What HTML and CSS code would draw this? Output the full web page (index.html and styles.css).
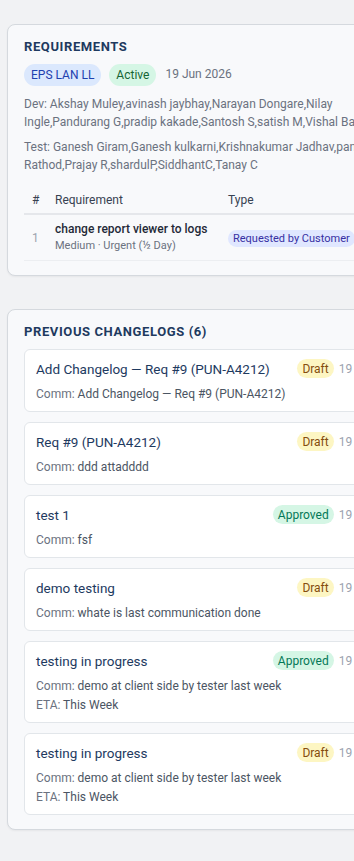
FILE: index.html
```html
<!DOCTYPE html>
<html lang="en">
<head>
<meta charset="utf-8">
<title>Requirements</title>
<link rel="stylesheet" href="styles.css">
</head>
<body>
<div class="page">
  <section class="card">
    <h2 class="card-title">REQUIREMENTS</h2>
    <div class="meta-row">
      <span class="pill pill-blue">EPS LAN LL</span>
      <span class="pill pill-green">Active</span>
      <span class="meta-date">19 Jun 2026</span>
    </div>
    <p class="team">Dev: Akshay Muley,avinash jaybhay,Narayan Dongare,Nilay Ingle,Pandurang G,pradip kakade,Santosh S,satish M,Vishal Barde</p>
    <p class="team">Test: Ganesh Giram,Ganesh kulkarni,Krishnakumar Jadhav,pankaj Rathod,Prajay R,shardulP,SiddhantC,Tanay C</p>
    <table class="req-table">
      <thead>
        <tr>
          <th class="col-num">#</th>
          <th class="col-req">Requirement</th>
          <th class="col-type">Type</th>
        </tr>
      </thead>
      <tbody>
        <tr>
          <td class="col-num num">1</td>
          <td class="col-req">
            <div class="req-name">change report viewer to logs</div>
            <div class="req-sub">Medium · Urgent (½ Day)</div>
          </td>
          <td class="col-type"><span class="type-pill">Requested by Customer</span></td>
        </tr>
      </tbody>
    </table>
  </section>

  <section class="card">
    <h2 class="card-title">PREVIOUS CHANGELOGS (6)</h2>
    <div class="log-list">
      <article class="log">
        <div class="log-head">
          <span class="log-title">Add Changelog — Req #9 (PUN-A4212)</span>
          <span class="status status-draft">Draft</span>
          <span class="log-date">19 Jun 2026</span>
        </div>
        <div class="log-line"><span class="lbl">Comm:</span> Add Changelog — Req #9 (PUN-A4212)</div>
      </article>
      <article class="log">
        <div class="log-head">
          <span class="log-title">Req #9 (PUN-A4212)</span>
          <span class="status status-draft">Draft</span>
          <span class="log-date">19 Jun 2026</span>
        </div>
        <div class="log-line"><span class="lbl">Comm:</span> ddd attadddd</div>
      </article>
      <article class="log">
        <div class="log-head">
          <span class="log-title">test 1</span>
          <span class="status status-approved">Approved</span>
          <span class="log-date">19 Jun 2026</span>
        </div>
        <div class="log-line"><span class="lbl">Comm:</span> fsf</div>
      </article>
      <article class="log">
        <div class="log-head">
          <span class="log-title">demo testing</span>
          <span class="status status-draft">Draft</span>
          <span class="log-date">19 Jun 2026</span>
        </div>
        <div class="log-line"><span class="lbl">Comm:</span> whate is last communication done</div>
      </article>
      <article class="log">
        <div class="log-head">
          <span class="log-title">testing in progress</span>
          <span class="status status-approved">Approved</span>
          <span class="log-date">19 Jun 2026</span>
        </div>
        <div class="log-line"><span class="lbl">Comm:</span> demo at client side by tester last week</div>
        <div class="log-line eta"><span class="lbl">ETA:</span> This Week</div>
      </article>
      <article class="log">
        <div class="log-head">
          <span class="log-title">testing in progress</span>
          <span class="status status-draft">Draft</span>
          <span class="log-date">19 Jun 2026</span>
        </div>
        <div class="log-line"><span class="lbl">Comm:</span> demo at client side by tester last week</div>
        <div class="log-line eta"><span class="lbl">ETA:</span> This Week</div>
      </article>
    </div>
  </section>
</div>
</body>
</html>
```

FILE: styles.css
```css
html, body {
  margin: 0;
  padding: 0;
  overflow: hidden;
  background: #f1f2f4;
}

body {
  font-family: Roboto, "Noto Sans", sans-serif;
  font-size: 12px;
  line-height: 18px;
  color: #374151;
}

.page {
  display: flex;
  flex-direction: column;
  gap: 33px;
  padding: 24px 0 30px 7px;
  width: 428px;
}

.card {
  background: #f8f9fb;
  border: 1px solid #d5d9de;
  border-radius: 8px;
  padding: 13px 16px 14px;
  box-shadow: 0 1px 2px rgba(0, 0, 0, 0.05);
}

.card-title {
  margin: 0 0 8px;
  font-size: 13px;
  line-height: 18px;
  font-weight: 700;
  letter-spacing: 0.6px;
  color: #1e3a5f;
}

.meta-row {
  display: flex;
  align-items: center;
  gap: 8px;
  margin-bottom: 9px;
}

.pill {
  display: inline-flex;
  align-items: center;
  height: 22px;
  padding: 0 7px;
  border-radius: 11px;
  font-size: 12px;
}

.pill-blue {
  background: #dbe8fd;
  color: #1e40af;
}

.pill-green {
  background: #d5f6e5;
  color: #166534;
}

.meta-date {
  margin-left: 1px;
  color: #6b7280;
  margin-top: -3px;
}

.team {
  margin: 0 0 7px;
  color: #6b7280;
  font-size: 12px;
  line-height: 18px;
}

.req-table {
  width: 100%;
  margin-top: 9px;
  border-collapse: collapse;
  table-layout: fixed;
}

.req-table th {
  text-align: left;
  font-weight: 400;
  color: #374151;
  padding: 8px 8px 4px;
  border-bottom: 2px solid #e5e7eb;
  line-height: 18px;
}

.req-table td {
  padding: 6px 8px;
  border-bottom: 1px solid #eceef1;
  vertical-align: middle;
}

.col-num { width: 7px; }
.col-req { width: 157px; }
.col-type { width: auto; }

.num {
  color: #9ca3af;
}

.req-name {
  font-weight: 500;
  color: #1f2937;
  line-height: 17px;
  white-space: nowrap;
}

.req-sub {
  font-size: 11px;
  line-height: 16px;
  color: #6b7280;
  white-space: nowrap;
}

.type-pill {
  display: inline-block;
  padding: 0 5px;
  border-radius: 9px;
  background: #e0e7ff;
  color: #3730a3;
  font-size: 11px;
  line-height: 17px;
  white-space: nowrap;
}

.log-list {
  display: flex;
  flex-direction: column;
  gap: 10px;
}

.log {
  background: #ffffff;
  border: 1px solid #e2e6ea;
  border-radius: 6px;
  padding: 9px 12px 8px 11px;
}

.log-head {
  display: flex;
  align-items: center;
  height: 19px;
  margin-bottom: 7px;
}

.log-title {
  flex: 1;
  font-size: 13.5px;
  font-weight: 400;
  color: #1e3a5f;
  white-space: nowrap;
}

.status {
  display: inline-flex;
  align-items: center;
  height: 19px;
  padding: 0 5px;
  border-radius: 10px;
  font-size: 12px;
}

.status-draft {
  background: #fdf6c3;
  color: #854d0e;
}

.status-approved {
  background: #d5f6e5;
  color: #047857;
}

.log-date {
  margin-left: 5px;
  color: #9ca3af;
  white-space: nowrap;
}

.log-line {
  color: #4b5563;
  line-height: 18px;
}

.log-line + .log-line {
  margin-top: 1px;
}

.lbl {
  color: #6b7280;
}
```
